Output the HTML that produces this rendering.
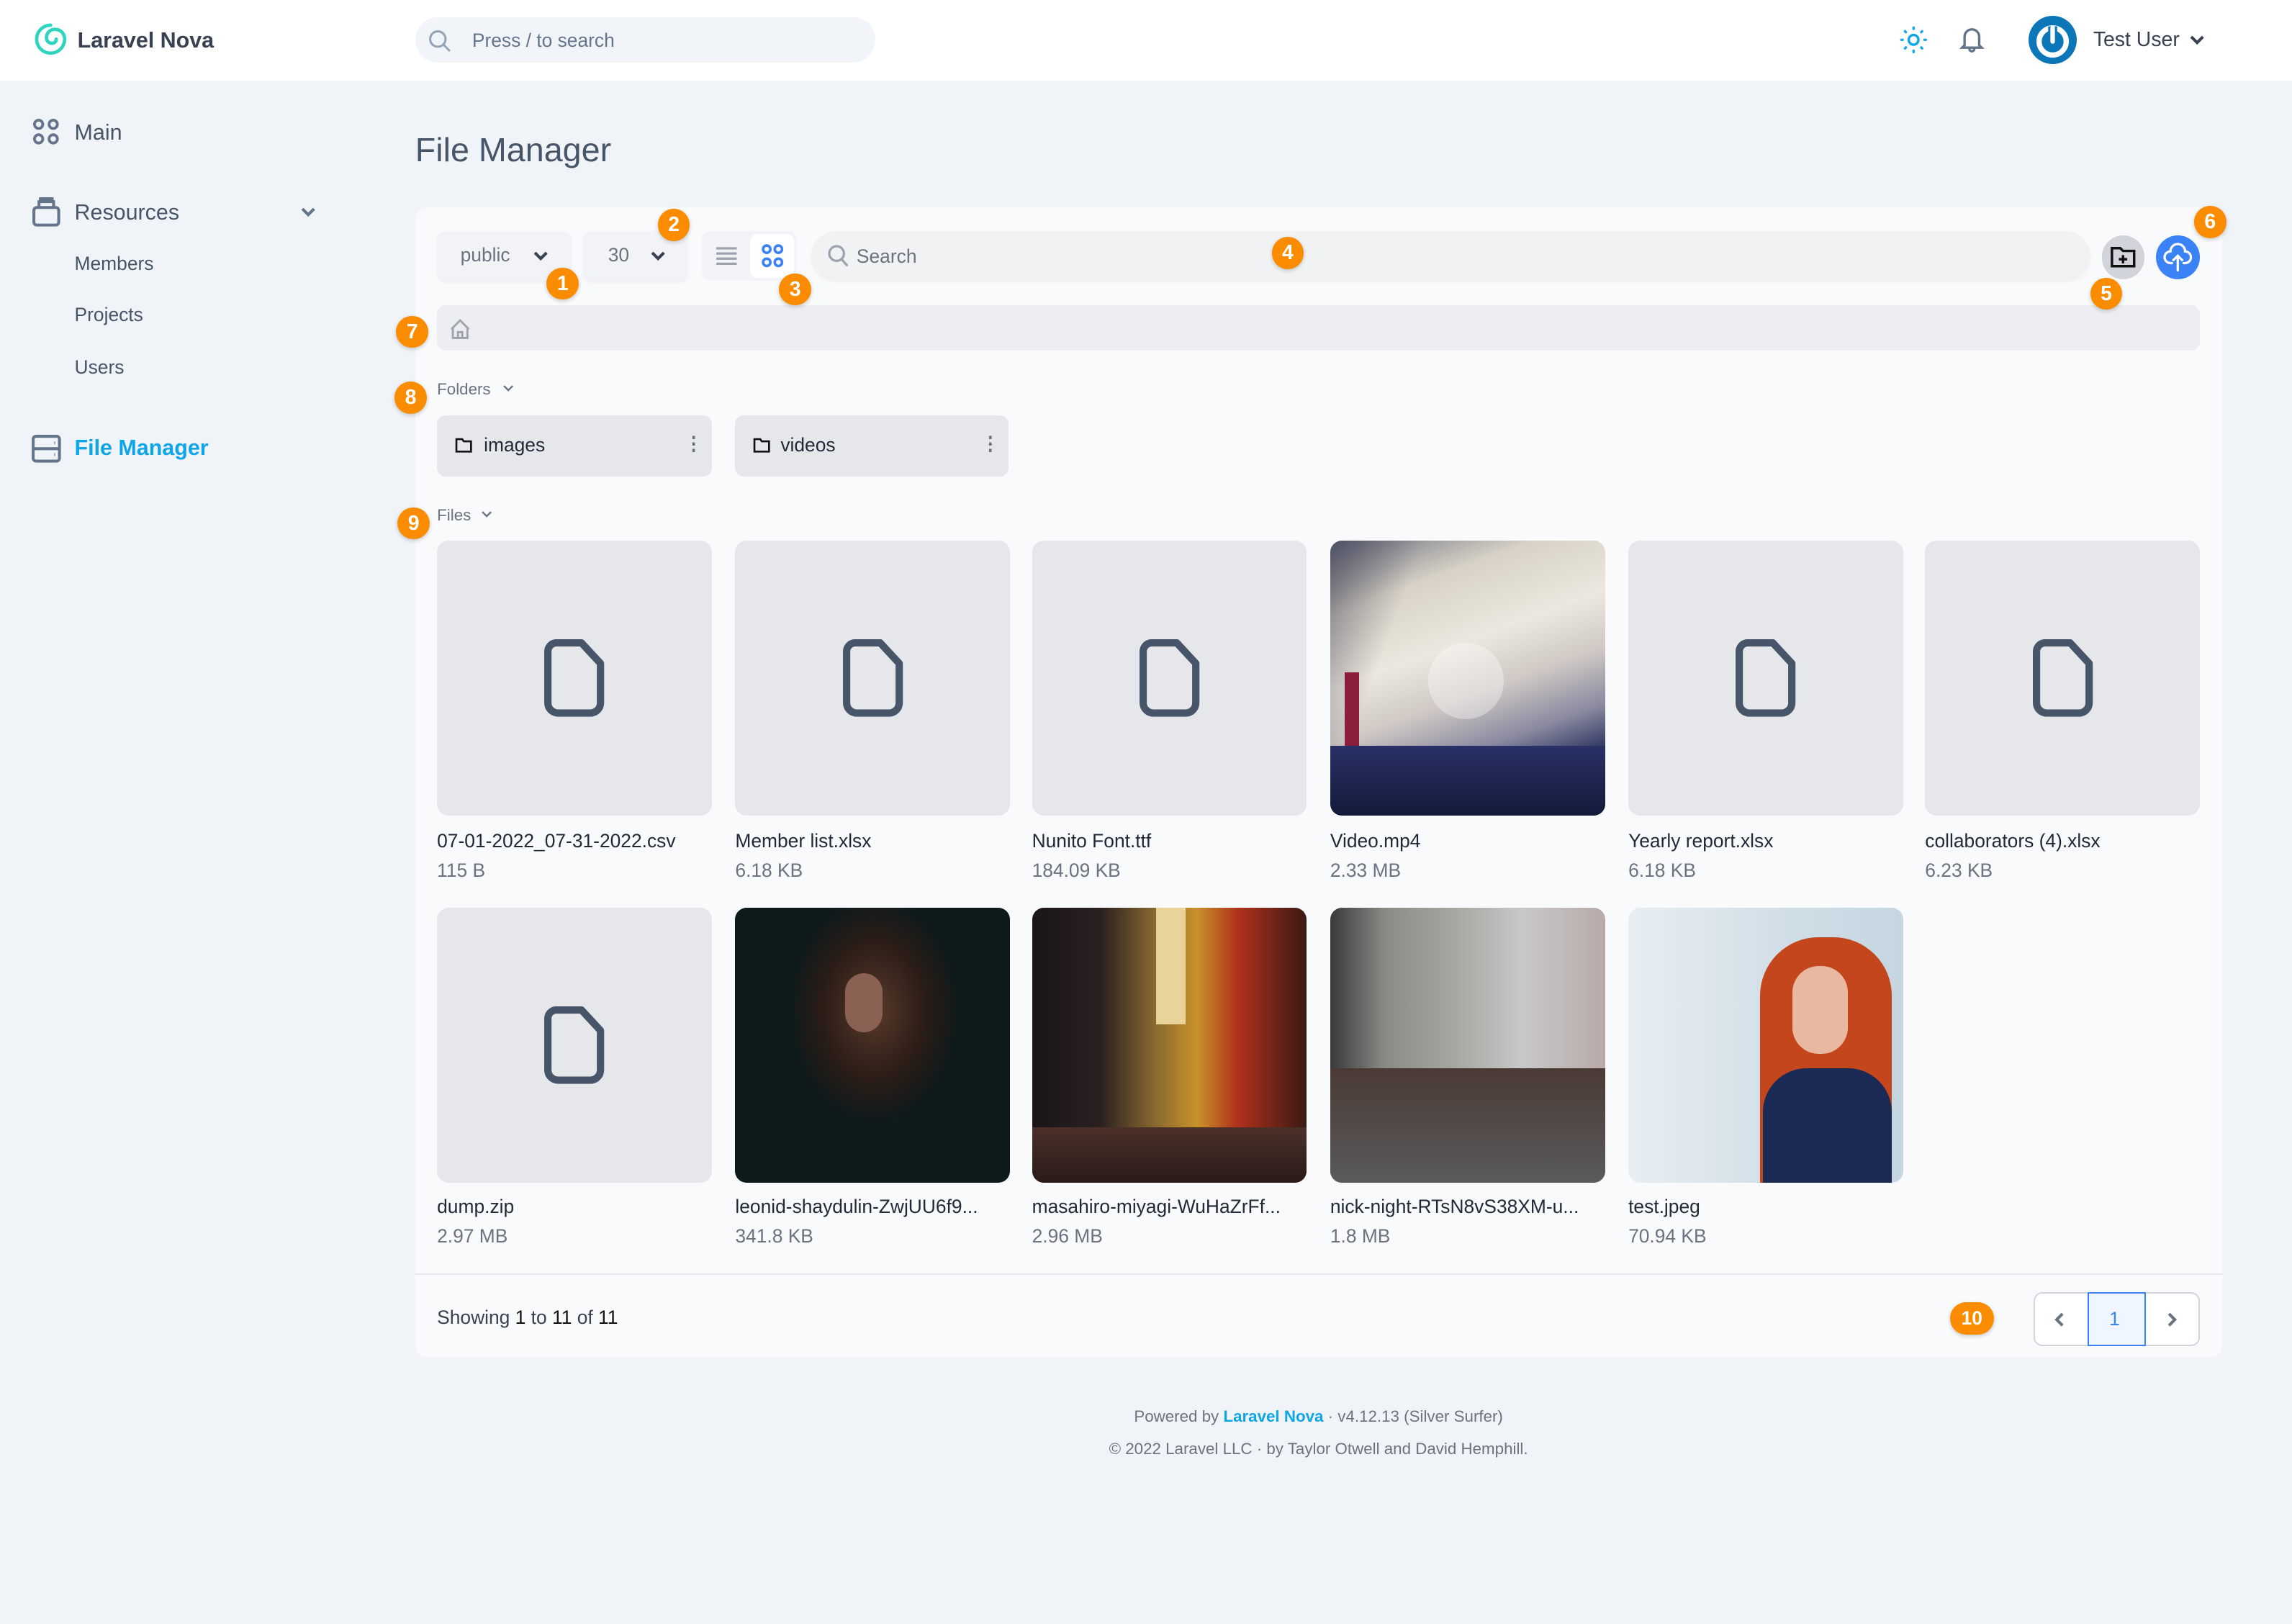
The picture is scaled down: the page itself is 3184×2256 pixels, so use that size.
<!DOCTYPE html>
<html><head><meta charset="utf-8">
<style>
*{box-sizing:border-box;margin:0;padding:0}
html,body{width:3184px;height:2256px;overflow:hidden;background:#f0f3f8}
#r{zoom:2.0306;width:1568px;height:1111px;position:relative;font-family:"Liberation Sans",sans-serif;color:#475569}
.a{position:absolute}
.hdr{left:0;top:0;width:1568px;height:55px;background:#fff}
.t{position:absolute;white-space:nowrap;line-height:1}
.badge{position:absolute;width:22px;height:22px;border-radius:11px;background:#fb8c00;color:#fff;font-weight:bold;font-size:14px;text-align:center;line-height:22px;box-shadow:0 1px 3px rgba(0,0,0,.2)}
.card{left:284px;top:142px;width:1236px;height:787px;background:#f8fafc;border-radius:8px}
.tile{position:absolute;width:188px;height:188px;border-radius:8px;background:#e5e7eb;overflow:hidden}
.fname{position:absolute;font-size:13px;color:#1f2937;white-space:nowrap}
.fsize{position:absolute;font-size:13px;color:#6b7280;white-space:nowrap}
.doc{position:absolute;left:73px;top:67px}
</style></head><body><div id="r">
<div class="a hdr"></div>
<svg class="a" style="left:23px;top:15px" width="23" height="24" viewBox="0 0 24 24"><path d="M12 2a10 10 0 1 0 10 10c0-4-3-7-7-7a6 6 0 0 0-6 6c0 2.5 2 4 4 4a3 3 0 0 0 3-3" fill="none" stroke="#2dd4bf" stroke-width="2.4" stroke-linecap="round"/></svg>
<div class="t" style="left:53px;top:20px;font-size:15px;font-weight:bold;color:#374151">Laravel Nova</div>
<div class="a" style="left:284px;top:12px;width:315px;height:31px;border-radius:16px;background:#f1f5f9"></div>
<svg class="a" style="left:292px;top:19px" width="18" height="18" viewBox="0 0 24 24"><circle cx="10" cy="10" r="7" fill="none" stroke="#94a3b8" stroke-width="2"/><path d="M15 15l6 6" stroke="#94a3b8" stroke-width="2"/></svg>
<div class="t" style="left:323px;top:21px;font-size:13px;color:#64748b">Press / to search</div>
<svg class="a" style="left:1299px;top:17px" width="20" height="20" viewBox="0 0 24 24" fill="none" stroke="#0ea5e9" stroke-width="2" stroke-linecap="round"><circle cx="12" cy="12" r="4"/><path d="M12 2v1M12 21v1M2 12h1M21 12h1M5 5l.7.7M18.3 18.3l.7.7M5 19l.7-.7M18.3 5.7l.7-.7"/></svg>
<svg class="a" style="left:1339px;top:16px" width="20" height="22" viewBox="0 0 24 24" fill="none" stroke="#64748b" stroke-width="2" stroke-linecap="round"><path d="M6 17V10a6 6 0 0 1 12 0v7l2 2H4z M10 20a2 2 0 0 0 4 0"/></svg>
<svg class="a" style="left:1388px;top:11px" width="33" height="33" viewBox="0 0 32 32"><circle cx="16" cy="16" r="16" fill="#0b76b8"/><circle cx="16" cy="17" r="9" fill="none" stroke="#fff" stroke-width="3.5"/><path d="M16 7v10" stroke="#0b76b8" stroke-width="6"/><path d="M16 8v9" stroke="#fff" stroke-width="3" stroke-linecap="round"/></svg>
<div class="t" style="left:1432px;top:20px;font-size:14px;color:#374151">Test User</div>
<svg class="a" style="left:1497px;top:22px" width="12" height="10" viewBox="0 0 12 10"><path d="M2 3l4 4 4-4" fill="none" stroke="#374151" stroke-width="2"/></svg>

<!-- sidebar -->
<svg class="a" style="left:22px;top:81px" width="19" height="19" viewBox="0 0 20 20" fill="none" stroke="#64748b" stroke-width="2"><rect x="1.5" y="1.5" width="6" height="6" rx="3"/><rect x="12" y="1.5" width="6" height="6" rx="3"/><rect x="1.5" y="12" width="6" height="6" rx="3"/><rect x="12" y="12" width="6" height="6" rx="3"/></svg>
<div class="t" style="left:51px;top:83px;font-size:15px">Main</div>
<svg class="a" style="left:21px;top:134px" width="21" height="22" viewBox="0 0 20 22" fill="none" stroke="#64748b" stroke-width="2"><rect x="1.5" y="8" width="17" height="12" rx="2"/><path d="M5 8V4h10v4M6 4V2h8v2"/></svg>
<div class="t" style="left:51px;top:138px;font-size:15px">Resources</div>
<svg class="a" style="left:205px;top:140px" width="12" height="10" viewBox="0 0 12 10"><path d="M2 3l4 4 4-4" fill="none" stroke="#64748b" stroke-width="2"/></svg>
<div class="t" style="left:51px;top:174px;font-size:13px">Members</div>
<div class="t" style="left:51px;top:209px;font-size:13px">Projects</div>
<div class="t" style="left:51px;top:245px;font-size:13px">Users</div>
<svg class="a" style="left:21px;top:297px" width="21" height="20" viewBox="0 0 21 20" fill="none" stroke="#64748b" stroke-width="2"><rect x="1.5" y="1.5" width="18" height="17" rx="2"/><path d="M1.5 10h18M16 6h.5M16 14h.5"/></svg>
<div class="t" style="left:51px;top:299px;font-size:15px;font-weight:bold;color:#0ea5e9">File Manager</div>

<div class="t" style="left:284px;top:91px;font-size:23px;color:#475569">File Manager</div>

<div class="a card"></div>
<!-- toolbar -->
<div class="a" style="left:299px;top:158px;width:92px;height:34px;border-radius:6px;background:#f1f3f6;box-shadow:0 1px 2px rgba(0,0,0,.05)"></div>
<div class="t" style="left:315px;top:168px;font-size:13px;color:#6b7280">public</div>
<svg class="a" style="left:364px;top:170px" width="12" height="10" viewBox="0 0 12 10"><path d="M2 3l4 4 4-4" fill="none" stroke="#374151" stroke-width="2"/></svg>
<div class="a" style="left:399px;top:158px;width:72px;height:34px;border-radius:6px;background:#f1f3f6;box-shadow:0 1px 2px rgba(0,0,0,.05)"></div>
<div class="t" style="left:416px;top:168px;font-size:13px;color:#6b7280">30</div>
<svg class="a" style="left:444px;top:170px" width="12" height="10" viewBox="0 0 12 10"><path d="M2 3l4 4 4-4" fill="none" stroke="#374151" stroke-width="2"/></svg>
<div class="a" style="left:480px;top:158px;width:65px;height:34px;border-radius:6px;background:#f1f3f6"></div>
<svg class="a" style="left:489px;top:168px" width="16" height="14" viewBox="0 0 16 14"><path d="M1 2h14M1 5.5h14M1 9h14M1 12.5h14" stroke="#9ca3af" stroke-width="1.6"/></svg>
<div class="a" style="left:513px;top:160px;width:30px;height:30px;border-radius:5px;background:#fff"></div>
<svg class="a" style="left:521px;top:167px" width="15" height="16" viewBox="0 0 15 16" fill="none" stroke="#3b82f6" stroke-width="1.8"><rect x="1" y="1" width="5" height="5" rx="2.5"/><rect x="9" y="1" width="5" height="5" rx="2.5"/><rect x="1" y="10" width="5" height="5" rx="2.5"/><rect x="9" y="10" width="5" height="5" rx="2.5"/></svg>
<div class="a" style="left:555px;top:158px;width:875px;height:34px;border-radius:17px;background:#f1f2f4;box-shadow:0 1px 2px rgba(0,0,0,.04)"></div>
<svg class="a" style="left:566px;top:167px" width="15" height="16" viewBox="0 0 15 16" fill="none" stroke="#9ca3af" stroke-width="1.6"><circle cx="6.5" cy="6.5" r="5"/><path d="M10 10.5l4 4.5"/></svg>
<div class="t" style="left:586px;top:169px;font-size:13px;color:#6b7280">Search</div>
<div class="a" style="left:1438px;top:161px;width:29px;height:30px;border-radius:15px;background:#d1d5db"></div>
<svg class="a" style="left:1443px;top:166px" width="19" height="19" viewBox="0 0 20 20" fill="none" stroke="#111" stroke-width="1.8"><path d="M2 4h6l2 2h8v11H2z"/><path d="M10 9v6M7 12h6"/></svg>
<div class="a" style="left:1475px;top:161px;width:30px;height:30px;border-radius:15px;background:#3b82f6"></div>
<svg class="a" style="left:1480px;top:165px" width="20" height="22" viewBox="0 0 20 22" fill="none" stroke="#fff" stroke-width="1.6" stroke-linecap="round"><path d="M6 15H5a4 4 0 0 1 0-8 5 5 0 0 1 10 0 4 4 0 0 1 0 8h-1"/><path d="M10 20V10M7 13l3-3 3 3"/></svg>
<!-- breadcrumb -->
<div class="a" style="left:299px;top:209px;width:1206px;height:31px;border-radius:6px;background:#ebedf0"></div>
<svg class="a" style="left:308px;top:217px" width="14" height="15" viewBox="0 0 14 15" fill="none" stroke="#9ca3af" stroke-width="1.4"><path d="M2 7v7h10V7M1 8l6-6 6 6M5.5 14v-4h3v4"/></svg>
<!-- folders -->
<div class="t" style="left:299px;top:261px;font-size:11px;color:#6b7280">Folders</div>
<svg class="a" style="left:343px;top:262px" width="10" height="8" viewBox="0 0 10 8"><path d="M2 2l3 3 3-3" fill="none" stroke="#6b7280" stroke-width="1.2"/></svg>
<div class="a" style="left:299px;top:284px;width:188px;height:42px;border-radius:6px;background:#e5e7eb"></div>
<svg class="a" style="left:311px;top:299px" width="12" height="11" viewBox="0 0 12 11" fill="none" stroke="#111" stroke-width="1.3"><path d="M1 1.5h4l1 1.5h5v7H1z"/></svg>
<div class="t" style="left:331px;top:298px;font-size:13px;color:#1f2937">images</div>
<div class="t" style="left:468px;top:297px;font-size:13px;color:#6b7280;font-weight:bold">⋮</div>
<div class="a" style="left:503px;top:284px;width:187px;height:42px;border-radius:6px;background:#e5e7eb"></div>
<svg class="a" style="left:515px;top:299px" width="12" height="11" viewBox="0 0 12 11" fill="none" stroke="#111" stroke-width="1.3"><path d="M1 1.5h4l1 1.5h5v7H1z"/></svg>
<div class="t" style="left:534px;top:298px;font-size:13px;color:#1f2937">videos</div>
<div class="t" style="left:671px;top:297px;font-size:13px;color:#6b7280;font-weight:bold">⋮</div>
<!-- files -->
<div class="t" style="left:299px;top:347px;font-size:11px;color:#6b7280">Files</div>
<svg class="a" style="left:328px;top:348px" width="10" height="8" viewBox="0 0 10 8"><path d="M2 2l3 3 3-3" fill="none" stroke="#6b7280" stroke-width="1.2"/></svg>

<div class="tile" style="left:299px;top:370px"><svg class="doc" width="42" height="54" viewBox="0 0 42 54"><path d="M8 3h18l13 14v27a7 7 0 0 1-7 7H10a7 7 0 0 1-7-7V9a6 6 0 0 1 5-6z" fill="none" stroke="#475569" stroke-width="5" stroke-linejoin="round"/></svg></div>
<div class="tile" style="left:503px;top:370px"><svg class="doc" width="42" height="54" viewBox="0 0 42 54"><path d="M8 3h18l13 14v27a7 7 0 0 1-7 7H10a7 7 0 0 1-7-7V9a6 6 0 0 1 5-6z" fill="none" stroke="#475569" stroke-width="5" stroke-linejoin="round"/></svg></div>
<div class="tile" style="left:706px;top:370px"><svg class="doc" width="42" height="54" viewBox="0 0 42 54"><path d="M8 3h18l13 14v27a7 7 0 0 1-7 7H10a7 7 0 0 1-7-7V9a6 6 0 0 1 5-6z" fill="none" stroke="#475569" stroke-width="5" stroke-linejoin="round"/></svg></div>
<div class="tile" style="left:910px;top:370px;background:linear-gradient(160deg,#6b7080 0%,#d8d2c6 20%,#ece8df 40%,#cfc8c4 55%,#8a8aa0 70%,#2d3560 82%,#1d2444 100%)">
 <div class="a" style="left:0;top:0;width:188px;height:188px;background:linear-gradient(110deg,rgba(60,60,80,.6) 0%,rgba(0,0,0,0) 25%)"></div>
 <div class="a" style="left:10px;top:90px;width:10px;height:60px;background:#8a1f3c"></div>
 <div class="a" style="left:67px;top:70px;width:52px;height:52px;border-radius:26px;background:rgba(255,255,255,.35)"></div>
 <div class="a" style="left:0;top:140px;width:188px;height:48px;background:linear-gradient(180deg,#2a3166,#141a3a)"></div>
</div>
<div class="tile" style="left:1114px;top:370px"><svg class="doc" width="42" height="54" viewBox="0 0 42 54"><path d="M8 3h18l13 14v27a7 7 0 0 1-7 7H10a7 7 0 0 1-7-7V9a6 6 0 0 1 5-6z" fill="none" stroke="#475569" stroke-width="5" stroke-linejoin="round"/></svg></div>
<div class="tile" style="left:1317px;top:370px"><svg class="doc" width="42" height="54" viewBox="0 0 42 54"><path d="M8 3h18l13 14v27a7 7 0 0 1-7 7H10a7 7 0 0 1-7-7V9a6 6 0 0 1 5-6z" fill="none" stroke="#475569" stroke-width="5" stroke-linejoin="round"/></svg></div>

<div class="fname" style="left:299px;top:568px">07-01-2022_07-31-2022.csv</div><div class="fsize" style="left:299px;top:588px">115 B</div>
<div class="fname" style="left:503px;top:568px">Member list.xlsx</div><div class="fsize" style="left:503px;top:588px">6.18 KB</div>
<div class="fname" style="left:706px;top:568px">Nunito Font.ttf</div><div class="fsize" style="left:706px;top:588px">184.09 KB</div>
<div class="fname" style="left:910px;top:568px">Video.mp4</div><div class="fsize" style="left:910px;top:588px">2.33 MB</div>
<div class="fname" style="left:1114px;top:568px">Yearly report.xlsx</div><div class="fsize" style="left:1114px;top:588px">6.18 KB</div>
<div class="fname" style="left:1317px;top:568px">collaborators (4).xlsx</div><div class="fsize" style="left:1317px;top:588px">6.23 KB</div>

<div class="tile" style="left:299px;top:621px"><svg class="doc" width="42" height="54" viewBox="0 0 42 54"><path d="M8 3h18l13 14v27a7 7 0 0 1-7 7H10a7 7 0 0 1-7-7V9a6 6 0 0 1 5-6z" fill="none" stroke="#475569" stroke-width="5" stroke-linejoin="round"/></svg></div>
<div class="tile" style="left:503px;top:621px;background:radial-gradient(ellipse 60px 80px at 95px 70px,#5a3a2c,#2a1c16 60%,#0c1a1c 100%)">
 <div class="a" style="left:75px;top:45px;width:26px;height:40px;border-radius:13px;background:#8a6152"></div>
</div>
<div class="tile" style="left:706px;top:621px;background:linear-gradient(90deg,#1a1418 0%,#2a2020 25%,#8a6a30 45%,#c8922a 60%,#b0301c 75%,#3a1a14 100%)">
 <div class="a" style="left:85px;top:0;width:20px;height:80px;background:#e8d49a"></div>
 <div class="a" style="left:0;top:150px;width:188px;height:38px;background:linear-gradient(180deg,#4a3028,#2a1a18)"></div>
</div>
<div class="tile" style="left:910px;top:621px;background:linear-gradient(90deg,#3a3a3c 0%,#8c8a84 20%,#a8a6a0 45%,#c8c8c8 70%,#b8aaa8 100%)">
 <div class="a" style="left:0;top:110px;width:188px;height:78px;background:linear-gradient(180deg,#4a3a34,#5a5a5c)"></div>
</div>
<div class="tile" style="left:1114px;top:621px;background:linear-gradient(90deg,#e8eef2,#cfdde6 60%,#c5d6e0)">
 <div class="a" style="left:90px;top:20px;width:90px;height:168px;border-radius:40px 40px 0 0;background:#c4461c"></div>
 <div class="a" style="left:112px;top:40px;width:38px;height:60px;border-radius:18px;background:#e9b8a0"></div>
 <div class="a" style="left:92px;top:110px;width:88px;height:78px;border-radius:30px 30px 0 0;background:#1a2a54"></div>
</div>

<div class="fname" style="left:299px;top:818px">dump.zip</div><div class="fsize" style="left:299px;top:838px">2.97 MB</div>
<div class="fname" style="left:503px;top:818px">leonid-shaydulin-ZwjUU6f9...</div><div class="fsize" style="left:503px;top:838px">341.8 KB</div>
<div class="fname" style="left:706px;top:818px">masahiro-miyagi-WuHaZrFf...</div><div class="fsize" style="left:706px;top:838px">2.96 MB</div>
<div class="fname" style="left:910px;top:818px">nick-night-RTsN8vS38XM-u...</div><div class="fsize" style="left:910px;top:838px">1.8 MB</div>
<div class="fname" style="left:1114px;top:818px">test.jpeg</div><div class="fsize" style="left:1114px;top:838px">70.94 KB</div>

<!-- footer of card -->
<div class="a" style="left:284px;top:871px;width:1236px;height:1px;background:#e5e7eb"></div>
<div class="t" style="left:299px;top:895px;font-size:13px;color:#374151">Showing <span style="color:#111">1</span> to <span style="color:#111">11</span> of <span style="color:#111">11</span></div>
<div class="a" style="left:1391px;top:884px;width:114px;height:37px;border-radius:6px;background:#fff;border:1px solid #d1d5db"></div>
<div class="a" style="left:1428px;top:884px;width:40px;height:37px;background:#eff6ff;border:1px solid #3b82f6"></div>
<div class="t" style="left:1443px;top:896px;font-size:13px;color:#3b82f6">1</div>
<svg class="a" style="left:1404px;top:897px" width="10" height="12" viewBox="0 0 10 12"><path d="M7 2L3 6l4 4" fill="none" stroke="#6b7280" stroke-width="2"/></svg>
<svg class="a" style="left:1481px;top:897px" width="10" height="12" viewBox="0 0 10 12"><path d="M3 2l4 4-4 4" fill="none" stroke="#6b7280" stroke-width="2"/></svg>

<div class="t" style="left:0;width:1804px;text-align:center;top:964px;font-size:11px;color:#6b7280">Powered by <b style="color:#0ea5e9">Laravel Nova</b> · v4.12.13 (Silver Surfer)</div>
<div class="t" style="left:0;width:1804px;text-align:center;top:986px;font-size:11px;color:#6b7280">© 2022 Laravel LLC · by Taylor Otwell and David Hemphill.</div>

<!-- badges -->
<div class="badge" style="left:374px;top:183px">1</div>
<div class="badge" style="left:450px;top:143px">2</div>
<div class="badge" style="left:533px;top:187px">3</div>
<div class="badge" style="left:870px;top:162px">4</div>
<div class="badge" style="left:1430px;top:190px">5</div>
<div class="badge" style="left:1501px;top:141px">6</div>
<div class="badge" style="left:271px;top:216px">7</div>
<div class="badge" style="left:270px;top:261px">8</div>
<div class="badge" style="left:272px;top:347px">9</div>
<div class="badge" style="left:1334px;top:891px;width:30px;font-size:13px">10</div>
</div></body></html>
